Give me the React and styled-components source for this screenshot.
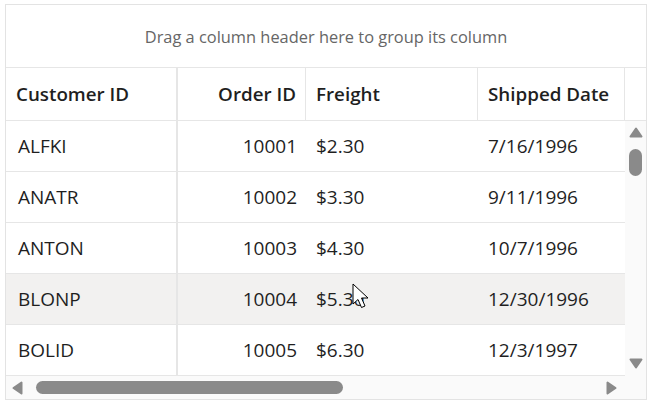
import React from "react";
import styled, { createGlobalStyle } from "styled-components";

const GlobalStyle = createGlobalStyle`
  html, body {
    margin: 0;
    padding: 0;
    background: #ffffff;
  }
  body {
    font-family: "Open Sans", "Noto Sans", sans-serif;
    color: #1f1f1f;
  }
`;

const rows = [
  { id: "ALFKI", order: "10001", freight: "$2.30", shipped: "7/16/1996" },
  { id: "ANATR", order: "10002", freight: "$3.30", shipped: "9/11/1996" },
  { id: "ANTON", order: "10003", freight: "$4.30", shipped: "10/7/1996" },
  { id: "BLONP", order: "10004", freight: "$5.30", shipped: "12/30/1996", hover: true },
  { id: "BOLID", order: "10005", freight: "$6.30", shipped: "12/3/1997" },
];

const App = () => {
  return (
    <>
      <GlobalStyle />
      <Page>
        <Grid>
          <GroupArea>Drag a column header here to group its column</GroupArea>
          <HeaderRow>
            <FrozenCell $header>Customer ID</FrozenCell>
            <HeaderCell $width={128} $align="right">Order ID</HeaderCell>
            <HeaderCell $width={172}>Freight</HeaderCell>
            <HeaderCell $width={147}>Shipped Date</HeaderCell>
            <HeaderFiller />
          </HeaderRow>
          <Body>
            <Viewport>
              {rows.map((row) => (
                <Row key={row.id} $hover={row.hover}>
                  <FrozenCell>{row.id}</FrozenCell>
                  <Cell $width={128} $align="right">{row.order}</Cell>
                  <Cell $width={172}>{row.freight}</Cell>
                  <Cell $width={147}>{row.shipped}</Cell>
                </Row>
              ))}
            </Viewport>
            <VScroll>
              <Arrow width="14" height="11" viewBox="0 0 14 11">
                <path d="M7 1.5 L12.5 9.5 H1.5 Z" fill="#8a8a8a" stroke="#8a8a8a" strokeWidth="2" strokeLinejoin="round" />
              </Arrow>
              <VThumb />
              <VSpacer />
              <Arrow width="14" height="11" viewBox="0 0 14 11">
                <path d="M7 9.5 L12.5 1.5 H1.5 Z" fill="#8a8a8a" stroke="#8a8a8a" strokeWidth="2" strokeLinejoin="round" />
              </Arrow>
            </VScroll>
          </Body>
          <Footer>
            <HScroll>
              <Arrow width="11" height="14" viewBox="0 0 11 14">
                <path d="M1.5 7 L9.5 1.5 V12.5 Z" fill="#8a8a8a" stroke="#8a8a8a" strokeWidth="2" strokeLinejoin="round" />
              </Arrow>
              <HThumb />
              <HSpacer />
              <Arrow width="11" height="14" viewBox="0 0 11 14">
                <path d="M9.5 7 L1.5 1.5 V12.5 Z" fill="#8a8a8a" stroke="#8a8a8a" strokeWidth="2" strokeLinejoin="round" />
              </Arrow>
            </HScroll>
            <Corner />
          </Footer>
          <Pointer width="22" height="30" viewBox="0 0 22 30">
            <path
              d="M1 1 L1 21 L6 16.5 L9.5 24.5 L13 23 L9.5 15 L16 15 Z"
              fill="#ffffff"
              stroke="#000000"
              strokeWidth="1"
              strokeLinejoin="miter"
            />
          </Pointer>
        </Grid>
      </Page>
    </>
  );
};

const Page = styled.div`
  padding: 4px 0 0 5px;
`;

const Grid = styled.div`
  position: relative;
  width: 640px;
  height: 394px;
  border: 1px solid #e3e3e3;
  display: flex;
  flex-direction: column;
  overflow: hidden;
`;

const GroupArea = styled.div`
  height: 62px;
  flex: none;
  display: flex;
  align-items: center;
  justify-content: center;
  font-size: 16.4px;
  color: #666666;
  border-bottom: 1px solid #e6e6e6;
`;

const HeaderRow = styled.div`
  height: 52px;
  flex: none;
  display: flex;
  border-bottom: 1px solid #e6e6e6;
`;

const FrozenCell = styled.div`
  flex: none;
  width: 158px;
  padding-left: ${({ $header }) => ($header ? 10 : 12)}px;
  padding-right: ${({ $header }) => ($header ? 2 : 0)}px;
  display: flex;
  align-items: center;
  border-right: 2px solid #e6e6e6;
  font-size: ${({ $header }) => ($header ? 18.8 : 19)}px;
  font-weight: ${({ $header }) => ($header ? 600 : 400)};
`;

const HeaderCell = styled.div`
  flex: none;
  box-sizing: border-box;
  width: ${({ $width }) => $width}px;
  padding: 0 9px 0 10px;
  display: flex;
  align-items: center;
  justify-content: ${({ $align }) => ($align === "right" ? "flex-end" : "flex-start")};
  border-right: 1px solid #e6e6e6;
  font-size: 18.8px;
  font-weight: 600;
`;

const HeaderFiller = styled.div`
  flex: 1;
`;

const Body = styled.div`
  flex: 1;
  display: flex;
  min-height: 0;
`;

const Viewport = styled.div`
  flex: 1;
  overflow: hidden;
`;

const Row = styled.div`
  height: 50px;
  display: flex;
  border-bottom: 1px solid #e6e6e6;
  background: ${({ $hover }) => ($hover ? "#f2f1f0" : "#ffffff")};
`;

const Cell = styled.div`
  flex: none;
  box-sizing: border-box;
  width: ${({ $width }) => $width}px;
  padding: 0 9px 0 10px;
  display: flex;
  align-items: center;
  justify-content: ${({ $align }) => ($align === "right" ? "flex-end" : "flex-start")};
  font-size: 19px;
`;

const VScroll = styled.div`
  flex: none;
  width: 21px;
  background: #fafafa;
  display: flex;
  flex-direction: column;
  align-items: center;
  padding: 6px 0 7px;
  box-sizing: border-box;
`;

const Arrow = styled.svg`
  flex: none;
  display: block;
`;

const VThumb = styled.div`
  flex: none;
  width: 13px;
  height: 27px;
  margin-top: 11px;
  border-radius: 7px;
  background: #8a8a8a;
`;

const VSpacer = styled.div`
  flex: 1;
`;

const Footer = styled.div`
  height: 23px;
  flex: none;
  display: flex;
`;

const HScroll = styled.div`
  flex: 1;
  background: #fafafa;
  display: flex;
  align-items: center;
  padding: 0 8px 0 6px;
`;

const HThumb = styled.div`
  flex: none;
  width: 307px;
  height: 13px;
  margin-left: 13px;
  border-radius: 7px;
  background: #8a8a8a;
`;

const HSpacer = styled.div`
  flex: 1;
`;

const Corner = styled.div`
  flex: none;
  width: 21px;
  background: #fafafa;
`;

const Pointer = styled.svg`
  position: absolute;
  left: 346px;
  top: 278px;
  pointer-events: none;
`;

export default App;
